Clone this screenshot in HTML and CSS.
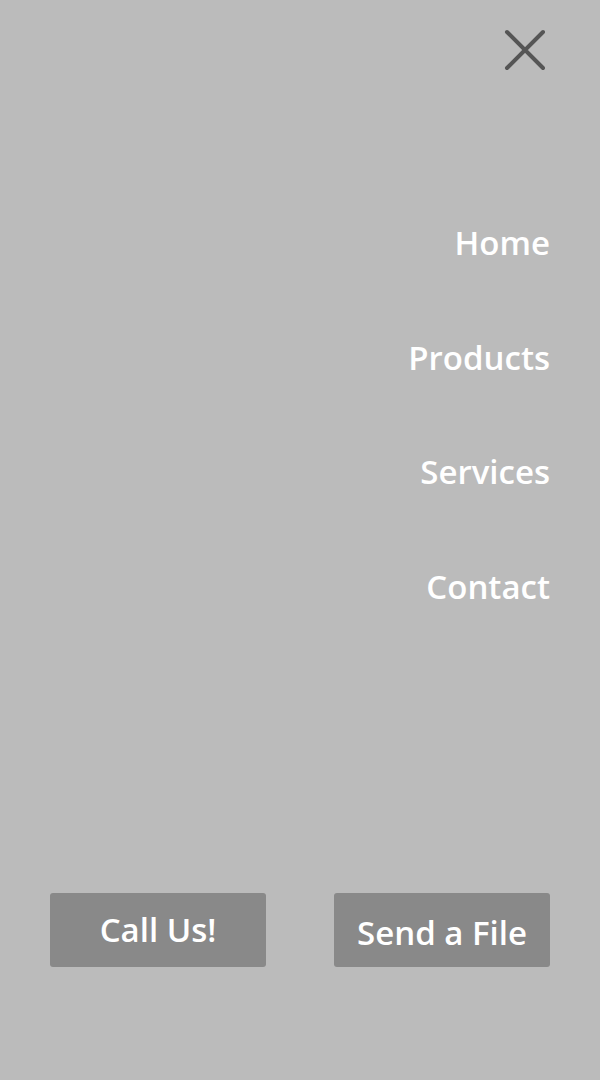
FILE: index.html
```html
<!DOCTYPE html>
<html>
<head>
<meta charset="utf-8">
<link rel="stylesheet" href="styles.css">
</head>
<body>
<div class="menu">
  <header class="top">
    <button class="close" aria-label="Close">
      <svg width="44" height="44" viewBox="0 0 44 44"><path d="M4 4 L40 40 M40 4 L4 40" stroke="#555555" stroke-width="4" stroke-linecap="round" fill="none"/></svg>
    </button>
  </header>
  <nav class="nav">
    <a href="#">Home</a>
    <a href="#">Products</a>
    <a href="#">Services</a>
    <a href="#">Contact</a>
  </nav>
  <div class="actions">
    <a class="btn btn-call" href="#">Call Us!</a>
    <a class="btn btn-file" href="#">Send a File</a>
  </div>
</div>
</body>
</html>
```
FILE: styles.css
```css
html, body {
  margin: 0;
  padding: 0;
  background: #bbbbbb;
  font-family: "Open Sans", "Noto Sans", sans-serif;
}
.menu {
  width: 600px;
  height: 1080px;
  box-sizing: border-box;
  padding: 0 50px;
  display: flex;
  flex-direction: column;
}
.top {
  display: flex;
  justify-content: flex-end;
  padding-top: 28px;
  margin-right: 3px;
}
.close {
  background: none;
  border: 0;
  padding: 0;
  width: 44px;
  height: 44px;
  cursor: pointer;
}
.close svg { display: block; }
.nav {
  display: flex;
  flex-direction: column;
  align-items: flex-end;
  margin-top: 114px;
}
.nav a {
  color: #ffffff;
  text-decoration: none;
  font-weight: 600;
  font-size: 33px;
  line-height: 114.5px;
}
.actions {
  margin-top: auto;
  margin-bottom: 113px;
  display: flex;
  justify-content: space-between;
}
.btn {
  width: 216px;
  height: 74px;
  box-sizing: border-box;
  border-radius: 3px;
  background: #898989;
  color: #ffffff;
  text-decoration: none;
  font-weight: 600;
  font-size: 33px;
  display: flex;
  align-items: center;
  justify-content: center;
}
.btn-call { padding-bottom: 2px; }
.btn-file { padding-top: 4px; }
```
